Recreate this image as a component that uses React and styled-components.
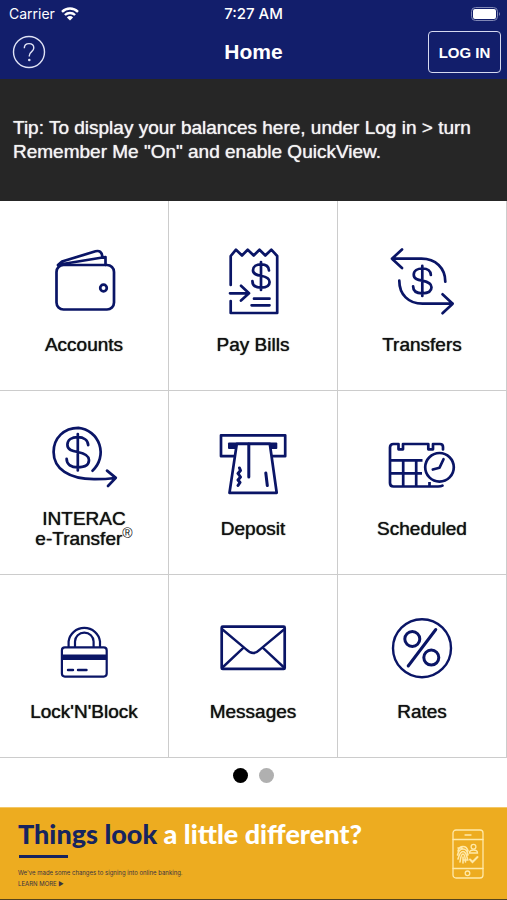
import React, { useState } from 'react'
import styled, { createGlobalStyle } from 'styled-components'

const navy = '#121e6b'
const ink = '#0a1566'
const line = '#cccccc'

const GlobalStyle = createGlobalStyle`
  * {
    box-sizing: border-box;
  }

  body {
    margin: 0;
    background: #fff;
    color: #111;
    font-family: "Liberation Sans", Arial, sans-serif;
  }

  button {
    font-family: inherit;
    padding: 0;
    border: 0;
    background: none;
    cursor: pointer;
  }
`

const Bar = styled.div`
  display: grid;
  grid-template-columns: 1fr auto 1fr;
  align-items: center;
  padding: 0 6px;
  color: #fff;
  background: ${navy};
`

const StatusBar = styled(Bar)`
  height: 27px;
  font-family: Inter, sans-serif;
  font-size: 15px;
  font-weight: 500;
`

const Carrier = styled.div`
  display: flex;
  align-items: center;
  gap: 6px;
  padding-left: 3px;
  font-size: 14px;
  font-weight: 400;
`

const Battery = styled.svg`
  justify-self: end;
`

const NavBar = styled(Bar)`
  height: 52px;
  padding-bottom: 2px;
`

const Title = styled.h1`
  margin: 0;
  font-size: 21px;
  font-weight: 700;
  line-height: 24px;
`

const HelpButton = styled.button`
  display: flex;
  width: 34px;
  height: 34px;
  margin-left: 6px;
`

const LoginButton = styled.button`
  && {
    justify-self: end;
    width: 73px;
    height: 42px;
    border: 1px solid #d5d9f0;
    border-radius: 4px;
    color: #fff;
    font-size: 15px;
    font-weight: 700;
  }
`

const Tip = styled.p`
  display: flex;
  align-items: center;
  min-height: 122px;
  margin: 0;
  padding: 0 13px;
  color: #f4f4f4;
  background: #262626;
  font-size: 19px;
  line-height: 24px;
  text-shadow: 0 0 1px currentColor;
`

const Grid = styled.div`
  display: grid;
  grid-template-columns: repeat(3, 1fr);
  grid-template-rows: 190px 184px 183px;
`

const Tile = styled.button`
  && {
    display: flex;
    flex-direction: column;
    align-items: center;
    justify-content: flex-end;
    gap: 11px;
    padding-bottom: 33px;
    border-right: 1px solid ${line};
    border-bottom: 1px solid ${line};
    color: #111;
  }
`

const TileIcon = styled.svg`
  width: 80px;
  height: 80px;
  fill: none;
  stroke: ${ink};
  stroke-width: 2.7;
  stroke-linecap: round;
  stroke-linejoin: round;
`

const Label = styled.span`
  display: flex;
  align-items: center;
  height: 24px;
  font-size: 19px;
  line-height: 20px;
  white-space: pre-line;
  text-shadow: 0 0 1px currentColor;

  sup {
    font-size: 14px;
    line-height: 0;
    text-shadow: none;
  }
`

const Dots = styled.div`
  display: flex;
  justify-content: center;
  gap: 11px;
  padding: 10px 0 24px;
`

const Dot = styled.button`
  && {
    width: 15px;
    height: 15px;
    border-radius: 50%;
    background: ${p => (p.$active ? '#000' : '#b0b0b0')};
  }
`

const Banner = styled.section`
  display: flex;
  align-items: center;
  justify-content: space-between;
  height: 93px;
  padding: 0 23px 0 18px;
  background: #edac20;
  border-top: 1px solid #f3c766;
  border-bottom: 1px solid #54431c;
`

const BannerTitle = styled.h2`
  margin: 0;
  color: #fff;
  font: 900 27px/30px Lato, sans-serif;

  span {
    color: #17245f;
  }
`

const Rule = styled.div`
  width: 49px;
  height: 3px;
  margin: 6px 0 9px 1px;
  background: #17245f;
`

const Small = styled.p`
  margin: 0;
  color: #3a3340;
  font-family: Inter, sans-serif;
  font-size: 6px;
  line-height: 11px;

  a {
    color: inherit;
    text-decoration: none;
  }
`

function Dollar ({ x, y, scale = 1 }) {
  return <path
    transform={`translate(${x} ${y}) scale(${scale})`}
    strokeWidth={2.7 / scale}
    d="M8-5.5C7.8-9.5 4.5-11.6 0-11.6S-8-9.5-8-5.8C-8-1.8-4-1 0-.2S8.6 1.8 8.6 6 5 11.6 0 11.6-8.6 9.5-8.6 5M0-14V14"
  />
}

const tiles = [
  {
    id: 'accounts',
    label: 'Accounts',
    icon: <>
      <rect x="12.5" y="23" width="57.5" height="44.5" rx="7" />
      <circle cx="59.5" cy="46" r="3.3" />
      <path d="M14 23 18 19.5 51.5 9.3C55.5 8.2 58 10 58.3 14.5M15.5 22.5 61.5 15V23" />
    </>
  },
  {
    id: 'bills',
    label: 'Pay Bills',
    icon: <>
      <path d="M17.7 43V14L23 7.7 29 13.5 34.7 7.7 40.7 13.5 46.5 7.7 52.3 13.5 58.3 7.7 64.2 14V71H17.7V59" />
      <path d="M17 51.3H36M28 43.8 36 51.3 28 58.6M41 56.7H56.5M38.6 63.3H56.5" />
      <Dollar x={48} y={34} />
    </>
  },
  {
    id: 'transfers',
    label: 'Transfers',
    icon: <>
      <path d="M20 7.5 10 16.7 20 26M10 16.7H39.5C53.5 16.7 63.3 26 63.3 39.7" />
      <path d="M60.5 52.3 70.7 61.7 60.5 71.2M70.7 61.7H40.5C26.5 61.7 17.3 52.5 17.3 38.7" />
      <Dollar x={40.3} y={38.9} scale={1.07} />
    </>
  },
  {
    id: 'interac',
    label: <span>{'INTERAC\n'}e-Transfer<sup>®</sup></span>,
    icon: <>
      <path d="M48.5 44.7A24.7 24.7 0 0 0 34.4 1.8C20 1.8 9.6 12 9.6 26 9.6 43 25 53 50 53.2Q61 53.3 71 52M63 44.6 71.8 51.9 64 60" />
      <Dollar x={33.8} y={26.3} scale={1.3} />
    </>
  },
  {
    id: 'deposit',
    label: 'Deposit',
    icon: <>
      <path d="M20.5 30.2H8V9.3H72.2V30.2H59.5" />
      <rect x="15" y="16.5" width="49.3" height="6.6" rx="1" fill={ink} stroke="none" />
      <path d="M23.8 17.8 16.5 66.8H63.7L56.8 17.8Z" fill="#fff" />
      <path d="M35.8 18V51M52.8 47 54.3 59.5M26.5 42 27.5 44.5 25 47.5 27.5 51 25 54 27 56.5 25 59.5" strokeWidth="3" />
    </>
  },
  {
    id: 'scheduled',
    label: 'Scheduled',
    icon: <>
      <path d="M61 23.5V21Q61 18 58 18H51V23.3H46.3V18H21V23.3H16.5V18H11.5Q8 18 8 21.5V57Q8 60.5 11.5 60.5H56Q59 60.5 60.5 59.6" />
      <path d="M8 34.3H40.5M8 47.3H40M21.2 34.3V60M34.2 34.3V60M47.5 56V60" strokeLinecap="butt" />
      <circle cx="57.5" cy="41.3" r="14.3" />
      <path d="M61.5 33.2 57.5 41.8 50.8 43.5" />
    </>
  },
  {
    id: 'lock',
    label: "Lock'N'Block",
    icon: <>
      <path d="M24.6 38V32.5A15.8 15.3 0 0 1 56 32.5V38M31 38V32.5A9.3 8.8 0 0 1 49.6 32.5V38" strokeWidth="2.2" />
      <rect x="17.9" y="38.4" width="44.8" height="29.2" rx="3" strokeWidth="2.2" />
      <path d="M18 48.3H62.5" strokeWidth="5.4" strokeLinecap="butt" />
      <path d="M24 61H29M34 61H42.5" strokeWidth="2.4" />
    </>
  },
  {
    id: 'messages',
    label: 'Messages',
    icon: <>
      <rect x="8.7" y="17.7" width="63" height="42.2" rx="1" />
      <path d="M9.5 20.5 33.5 40.7Q40.2 47.4 46.8 40.7L71 20.5M10 58 29.5 39.7M70.5 58 50.8 39.7" strokeWidth="2.4" />
    </>
  },
  {
    id: 'rates',
    label: 'Rates',
    icon: <>
      <circle cx="40" cy="39.2" r="29" strokeWidth="2.4" />
      <circle cx="30.3" cy="30" r="7.5" strokeWidth="3" />
      <circle cx="49.3" cy="48.6" r="7.5" strokeWidth="3" />
      <path d="M53.8 20.5 26.2 57" strokeWidth="3" />
    </>
  }
]

function App () {
  const [page, setPage] = useState(0)

  return <>
    <GlobalStyle />
    <header>
      <StatusBar>
        <Carrier>
          Carrier
          <svg width="18" height="14" viewBox="0 0 18 14" fill="none" stroke="#fff" strokeWidth="2.4">
            <path d="M1 4.8A11.5 11.5 0 0 1 17 4.8M3.9 8A7.4 7.4 0 0 1 14.1 8" />
            <path d="M9 13.6 5.9 10.4A4.4 4.4 0 0 1 12.1 10.4Z" fill="#fff" stroke="none" />
          </svg>
        </Carrier>
        <span>7:27 AM</span>
        <Battery width="31" height="14" viewBox="0 0 31 14">
          <rect x="1.5" y="0.5" width="26" height="13" rx="4" fill="none" stroke="#8087b5" />
          <rect x="3" y="2" width="23" height="10" rx="2" fill="#fff" />
          <path d="M29 5Q31 7 29 9Z" fill="#8087b5" />
        </Battery>
      </StatusBar>
      <NavBar>
        <HelpButton aria-label="Help">
          <svg width="34" height="34" viewBox="0 0 34 34" fill="none" stroke="#dfe2f5" strokeWidth="1.4">
            <circle cx="17" cy="17" r="15.5" />
            <path d="M12.3 13.2C12.3 10.3 14.3 8.6 17 8.6S21.8 10.3 21.8 13C21.8 16.6 17.3 16.7 17.3 20.8V21.6" />
            <circle cx="17.3" cy="25" r="1.3" fill="#dfe2f5" stroke="none" />
          </svg>
        </HelpButton>
        <Title>Home</Title>
        <LoginButton>LOG IN</LoginButton>
      </NavBar>
    </header>
    <main>
      <Tip>Tip: To display your balances here, under Log in &gt; turn Remember Me "On" and enable QuickView.</Tip>
      <Grid>
        {tiles.map(tile => (
          <Tile key={tile.id}>
            <TileIcon viewBox="0 0 80 80" aria-hidden="true">{tile.icon}</TileIcon>
            <Label>{tile.label}</Label>
          </Tile>
        ))}
      </Grid>
      <Dots>
        {[0, 1].map(i => (
          <Dot key={i} $active={i === page} onClick={() => setPage(i)} aria-label={`Page ${i + 1}`} />
        ))}
      </Dots>
    </main>
    <Banner>
      <div>
        <BannerTitle><span>Things look</span> a little different?</BannerTitle>
        <Rule />
        <Small>We've made some changes to signing into online banking.</Small>
        <Small><a href="#learn">LEARN MORE ►</a></Small>
      </div>
      <svg width="32" height="50" viewBox="0 0 32 50" fill="none" stroke="#ffe9a8" strokeWidth="1.3" strokeLinecap="round">
        <rect x="1" y="1" width="30" height="48" rx="3" />
        <path d="M1 10.5H31M1 39.5H31M13 6H19" />
        <circle cx="15.5" cy="44.3" r="2.3" />
        <path d="M6 22Q7 17.5 11 17.5T16 22M5.5 26Q7 20 11 20T16 26M6 30Q8 22.5 11 22.5T15.5 30M8 33Q9 25 11 25T13.5 33M11 28V34M6 19H10M12 31H16" strokeWidth="1.6" />
        <circle cx="21.5" cy="17.7" r="2.4" />
        <path d="M17.5 24Q17.5 21 21.5 21T25.5 24Z" />
        <path d="M18 30.5 20.5 33 25.5 28" strokeWidth="2" />
      </svg>
    </Banner>
  </>
}

export default App
